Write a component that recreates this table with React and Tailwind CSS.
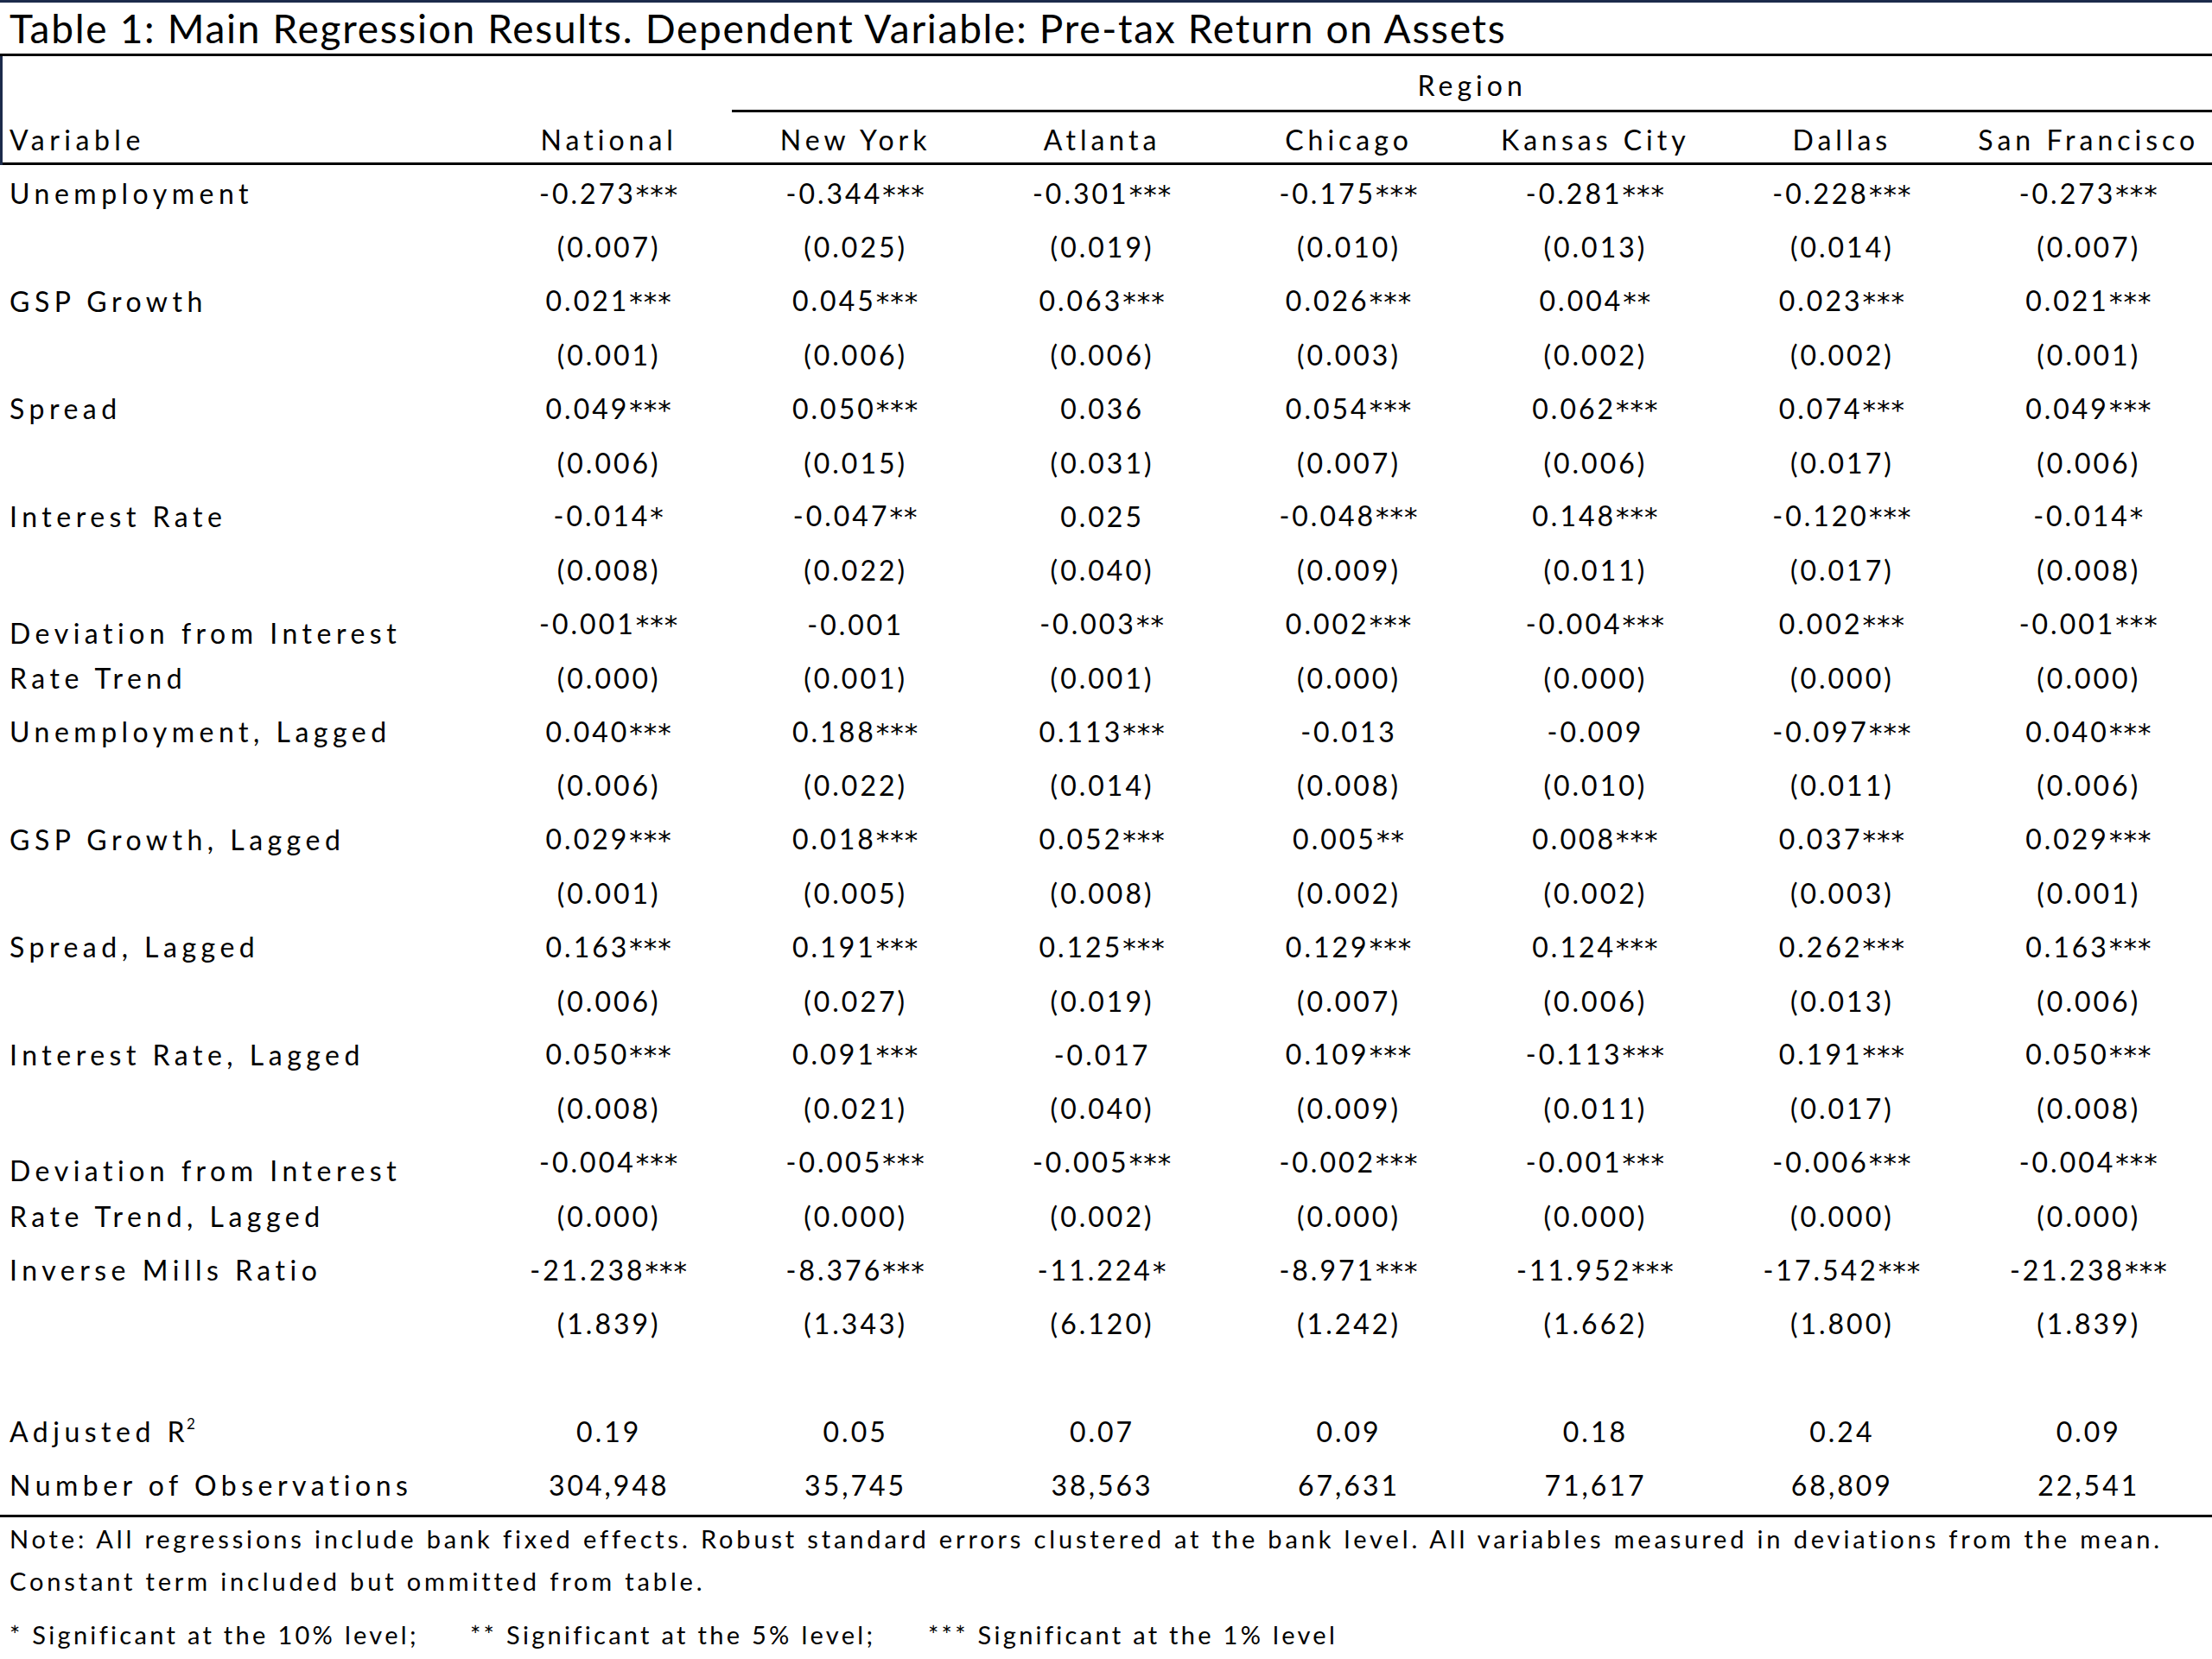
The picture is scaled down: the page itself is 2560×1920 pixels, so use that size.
import React from 'react'

const columns = ['National', 'New York', 'Atlanta', 'Chicago', 'Kansas City', 'Dallas', 'San Francisco']

// each entry is one line of the table; "low" pushes the first line of a two-line label down
const rows = [
  { label: 'Unemployment', vals: ['-0.273***', '-0.344***', '-0.301***', '-0.175***', '-0.281***', '-0.228***', '-0.273***'] },
  { label: '', vals: ['(0.007)', '(0.025)', '(0.019)', '(0.010)', '(0.013)', '(0.014)', '(0.007)'] },
  { label: 'GSP Growth', vals: ['0.021***', '0.045***', '0.063***', '0.026***', '0.004**', '0.023***', '0.021***'] },
  { label: '', vals: ['(0.001)', '(0.006)', '(0.006)', '(0.003)', '(0.002)', '(0.002)', '(0.001)'] },
  { label: 'Spread', vals: ['0.049***', '0.050***', '0.036', '0.054***', '0.062***', '0.074***', '0.049***'] },
  { label: '', vals: ['(0.006)', '(0.015)', '(0.031)', '(0.007)', '(0.006)', '(0.017)', '(0.006)'] },
  { label: 'Interest Rate', vals: ['-0.014*', '-0.047**', '0.025', '-0.048***', '0.148***', '-0.120***', '-0.014*'] },
  { label: '', vals: ['(0.008)', '(0.022)', '(0.040)', '(0.009)', '(0.011)', '(0.017)', '(0.008)'] },
  { label: 'Deviation from Interest', low: true, vals: ['-0.001***', '-0.001', '-0.003**', '0.002***', '-0.004***', '0.002***', '-0.001***'] },
  { label: 'Rate Trend', vals: ['(0.000)', '(0.001)', '(0.001)', '(0.000)', '(0.000)', '(0.000)', '(0.000)'] },
  { label: 'Unemployment, Lagged', vals: ['0.040***', '0.188***', '0.113***', '-0.013', '-0.009', '-0.097***', '0.040***'] },
  { label: '', vals: ['(0.006)', '(0.022)', '(0.014)', '(0.008)', '(0.010)', '(0.011)', '(0.006)'] },
  { label: 'GSP Growth, Lagged', vals: ['0.029***', '0.018***', '0.052***', '0.005**', '0.008***', '0.037***', '0.029***'] },
  { label: '', vals: ['(0.001)', '(0.005)', '(0.008)', '(0.002)', '(0.002)', '(0.003)', '(0.001)'] },
  { label: 'Spread, Lagged', vals: ['0.163***', '0.191***', '0.125***', '0.129***', '0.124***', '0.262***', '0.163***'] },
  { label: '', vals: ['(0.006)', '(0.027)', '(0.019)', '(0.007)', '(0.006)', '(0.013)', '(0.006)'] },
  { label: 'Interest Rate, Lagged', vals: ['0.050***', '0.091***', '-0.017', '0.109***', '-0.113***', '0.191***', '0.050***'] },
  { label: '', vals: ['(0.008)', '(0.021)', '(0.040)', '(0.009)', '(0.011)', '(0.017)', '(0.008)'] },
  { label: 'Deviation from Interest', low: true, vals: ['-0.004***', '-0.005***', '-0.005***', '-0.002***', '-0.001***', '-0.006***', '-0.004***'] },
  { label: 'Rate Trend, Lagged', vals: ['(0.000)', '(0.000)', '(0.002)', '(0.000)', '(0.000)', '(0.000)', '(0.000)'] },
  { label: 'Inverse Mills Ratio', vals: ['-21.238***', '-8.376***', '-11.224*', '-8.971***', '-11.952***', '-17.542***', '-21.238***'] },
  { label: '', vals: ['(1.839)', '(1.343)', '(6.120)', '(1.242)', '(1.662)', '(1.800)', '(1.839)'] },
  { label: '', vals: ['', '', '', '', '', '', ''] },
  { label: 'Adjusted R', sup: '2', vals: ['0.19', '0.05', '0.07', '0.09', '0.18', '0.24', '0.09'] },
  { label: 'Number of Observations', vals: ['304,948', '35,745', '38,563', '67,631', '71,617', '68,809', '22,541'] },
]

function Value({ v }) {
  const num = v.replace(/\*+$/, '')
  const stars = v.slice(num.length)
  return (
    <>
      {num}
      {stars && <span className="font-['DejaVu_Sans',sans-serif] text-[31px] tracking-[1px]">{stars}</span>}
    </>
  )
}

function Row({ row }) {
  return (
    <div className="grid grid-cols-[562px_repeat(7,minmax(0,1fr))] h-[62.3px] items-center">
      <div className={`pl-[11px] tracking-[5.5px] whitespace-nowrap ${row.low ? 'pt-[24px]' : 'pt-[4px]'}`}>
        {row.label}
        {row.sup && <span className="inline-block text-[17px] tracking-normal relative -top-[15px] -ml-[3px]">{row.sup}</span>}
      </div>
      {row.vals.map((v, i) => (
        <div key={i} className="text-center tracking-[3px] whitespace-nowrap pt-[4px]"><Value v={v} /></div>
      ))}
    </div>
  )
}

export default function App() {
  return (
    <div className="w-[2560px] h-[1920px] bg-white text-black font-['Lato',sans-serif] overflow-hidden">
      <div className="h-[3px] bg-[#1c2b4b]" />
      <div className="h-[59px] flex items-center pl-[11px] text-[46px] tracking-[1.7px] leading-none pt-[1px]">
        Table 1: Main Regression Results. Dependent Variable: Pre-tax Return on Assets
      </div>
      <div className="h-[3px] bg-black" />

      <div className="text-[32px] leading-none">
        <div className="border-l-[3px] border-[#1c2b4b]">
          <div className="grid grid-cols-[559px_repeat(7,minmax(0,1fr))] h-[65px]">
            <div className="col-start-3 col-end-9 border-b-[3px] border-black flex items-center justify-center tracking-[5px] pt-[6px]">
              Region
            </div>
          </div>
          <div className="grid grid-cols-[559px_repeat(7,minmax(0,1fr))] h-[61px] items-center border-b-[3px] border-black pt-[5px]">
            <div className="pl-[8px] tracking-[5.5px]">Variable</div>
            {columns.map(c => (
              <div key={c} className="text-center tracking-[5px] whitespace-nowrap">{c}</div>
            ))}
          </div>
        </div>

        {rows.map((r, i) => <Row key={i} row={r} />)}

        <div className="h-[3px] bg-black mt-[5px]" />
      </div>

      <div className="text-[29px] leading-none tracking-[3.85px] pl-[11px] pt-[10px] flex flex-col">
        <div className="h-[49px]">
          Note: All regressions include bank fixed effects. Robust standard errors clustered at the bank level. All variables measured in deviations from the mean.
        </div>
        <div className="h-[62px]">Constant term included but ommitted from table.</div>
        <div className="flex tracking-[3.3px]">
          <span className="w-[533px]">* Significant at the 10% level;</span>
          <span className="w-[530px]">** Significant at the 5% level;</span>
          <span>*** Significant at the 1% level</span>
        </div>
      </div>
    </div>
  )
}
